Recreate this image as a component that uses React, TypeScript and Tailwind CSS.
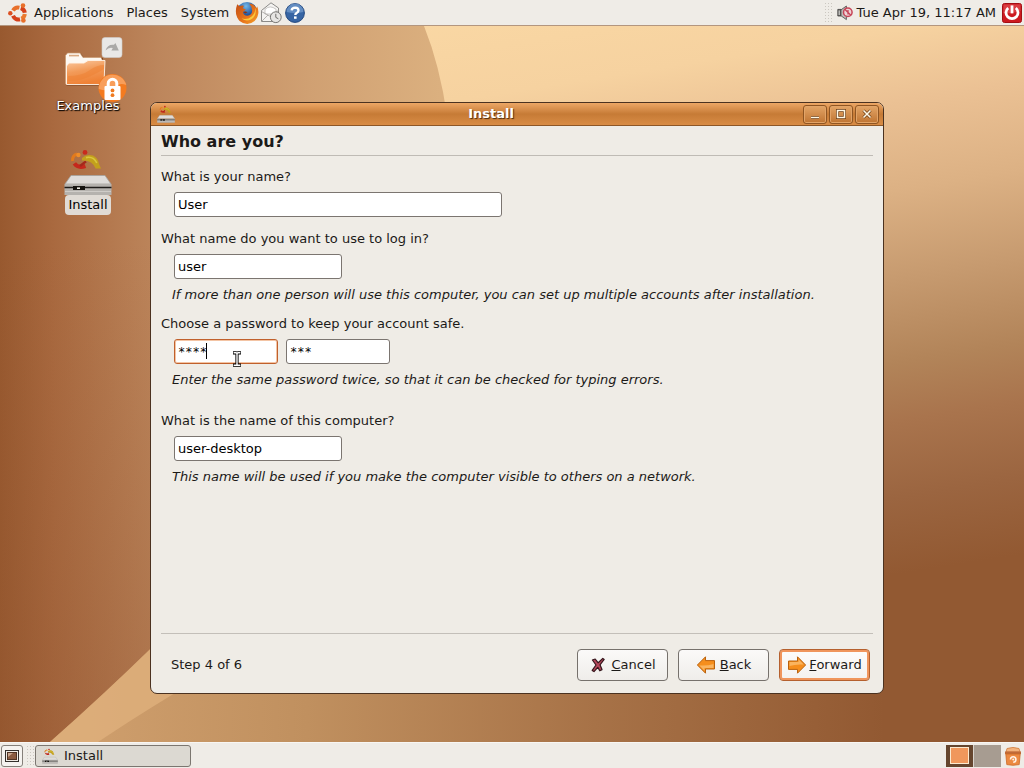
import React, { useState } from 'react';

const Wallpaper = () => (
  <svg
    className="absolute inset-0 h-full w-full"
    viewBox="0 0 1024 717"
    preserveAspectRatio="none"
    aria-hidden="true"
  >
    <defs>
      <linearGradient id="wallLeft" x1="0" y1="0" x2="440" y2="0" gradientUnits="userSpaceOnUse">
        <stop offset="0" stopColor="#98592f" />
        <stop offset="0.12" stopColor="#a9693f" />
        <stop offset="0.36" stopColor="#bd865c" />
        <stop offset="0.7" stopColor="#d0a072" />
        <stop offset="1" stopColor="#dbb07f" />
      </linearGradient>
      <linearGradient id="wallShade" x1="0" y1="0" x2="0" y2="1">
        <stop offset="0.3" stopColor="#8f5430" stopOpacity="0" />
        <stop offset="1" stopColor="#8f5430" stopOpacity="0.35" />
      </linearGradient>
      <linearGradient id="wallRight" x1="760" y1="-70" x2="860" y2="555" gradientUnits="userSpaceOnUse">
        <stop offset="0" stopColor="#fad8a4" />
        <stop offset="0.15" stopColor="#f6d2a0" />
        <stop offset="0.26" stopColor="#ebc194" />
        <stop offset="0.4" stopColor="#dcb184" />
        <stop offset="0.54" stopColor="#c69a6f" />
        <stop offset="0.67" stopColor="#b28459" />
        <stop offset="0.76" stopColor="#a9744d" />
        <stop offset="0.88" stopColor="#9b6540" />
        <stop offset="1" stopColor="#925932" />
      </linearGradient>
      <linearGradient id="wallBottom" x1="60" y1="0" x2="884" y2="0" gradientUnits="userSpaceOnUse">
        <stop offset="0" stopColor="#d0a06e" />
        <stop offset="0.3" stopColor="#c0905f" />
        <stop offset="0.65" stopColor="#a77247" />
        <stop offset="1" stopColor="#925932" />
      </linearGradient>
    </defs>
    <rect width="1024" height="717" fill="url(#wallLeft)" />
    <rect width="450" height="717" fill="url(#wallShade)" />
    <path d="M424 0Q440 40 447 90L500 717H1024V0Z" fill="url(#wallRight)" />
    <path d="M50 717Q105 668 150 624H884V717Z" fill="url(#wallBottom)" />
    <path d="M50 717Q105 668 150 624H250Q160 675 98 717Z" fill="#e0b17e" opacity="0.75" />
  </svg>
);

const UbuntuLogo = () => (
  <svg className="h-5 w-5" viewBox="0 0 20 20" fill="none" aria-hidden="true">
    <path d="M5 7.4A6 6 0 0 1 11.4 4.6" stroke="#e8702a" strokeWidth="4" />
    <path d="M12.8 5A6 6 0 0 1 16.8 9.8" stroke="#d5401b" strokeWidth="4" />
    <path d="M16.8 11A6 6 0 0 1 13.4 15.8" stroke="#ea7a30" strokeWidth="4" />
    <path d="M5 12.8A6 6 0 0 0 12 16.3" stroke="#d5401b" strokeWidth="4" />
    <circle cx="2.3" cy="10.2" r="2.2" fill="#dc4f22" />
    <circle cx="15" cy="2.6" r="2.3" fill="#e8702a" />
    <circle cx="15.4" cy="17.4" r="2.3" fill="#e8702a" />
  </svg>
);

const FirefoxIcon = () => (
  <svg className="h-6 w-6" viewBox="0 0 24 24" aria-hidden="true">
    <defs>
      <radialGradient id="globe" cx="0.45" cy="0.2" r="0.8">
        <stop offset="0" stopColor="#75b9ea" />
        <stop offset="0.5" stopColor="#24579f" />
        <stop offset="1" stopColor="#122a62" />
      </radialGradient>
      <linearGradient id="fox" x1="0" y1="0" x2="1" y2="1">
        <stop offset="0" stopColor="#c14d14" />
        <stop offset="0.6" stopColor="#e8761c" />
        <stop offset="1" stopColor="#f5a52a" />
      </linearGradient>
    </defs>
    <circle cx="12" cy="11.5" r="10.5" fill="url(#globe)" />
    <path
      d="M2.2 3.2L4.6 5.2Q6.6 4 9 4.8L7.8 7.2L10.8 8.4L8 11Q8.4 14.8 12.4 14.8Q16.8 14.4 17.2 9.8Q17 5.6 14.2 2.4Q19.6 3 21.2 7.2L22.2 5.4Q25.6 13.6 19.6 20Q12.2 26 4.6 20Q-1.4 13.2 2.2 3.2Z"
      fill="url(#fox)"
    />
    <path d="M20.6 6.4Q22 15 16 18.6Q11 20.8 6.6 17.6Q12.8 19 16.6 15.4Q20.4 12 20.6 6.4Z" fill="#fbc93a" />
    <path d="M8 11Q10.4 9.8 12.6 11.2L10.2 12.6Z" fill="#8a3210" />
  </svg>
);

const MailIcon = () => (
  <svg className="h-6 w-6" viewBox="0 0 24 24" aria-hidden="true">
    <path d="M2.5 9.5L12 1.8L19.5 7V20.5H2.5Z" fill="#f4f3f1" stroke="#8b8a88" />
    <path d="M6 8.4Q11 3.6 17 8.2V13H6Z" fill="#fff" stroke="#b5b3b0" strokeWidth="0.7" />
    <path d="M2.5 10.5L10.5 15L19.5 9.5M3 20L9 14" fill="none" stroke="#a3a19e" strokeWidth="0.8" />
    <circle cx="16.8" cy="16.2" r="5.4" fill="#e6e5e3" stroke="#777674" />
    <path d="M16.8 12.8V16.4L19.4 17.8" fill="none" stroke="#6e6d6b" />
  </svg>
);

const HelpIcon = () => (
  <svg className="h-5 w-5" viewBox="0 0 20 20" aria-hidden="true">
    <circle cx="10" cy="10" r="9.4" fill="#3765a4" stroke="#254a80" />
    <path d="M1.6 9A8.4 8.4 0 0 1 18.4 9Q10 11 1.6 9Z" fill="#7ba3d2" opacity="0.65" />
    <path
      d="M6.6 7.4Q7 4.7 10.2 4.7Q13.5 4.8 13.5 7.4Q13.4 9 11.6 10Q10.3 10.8 10.3 12"
      fill="none"
      stroke="#fff"
      strokeWidth="2.3"
    />
    <rect x="9" y="13.4" width="2.6" height="2.4" fill="#fff" />
  </svg>
);

const MutedIcon = () => (
  <svg className="h-4 w-4" viewBox="0 0 16 16" aria-hidden="true">
    <path d="M.8 4.4H4V11H.8Z" fill="#6f6e6c" stroke="#3d3c3b" strokeWidth="0.8" />
    <path d="M4 4.8L9.4 1V14.6L4 10.8Z" fill="#bdbbb8" stroke="#4b4a48" strokeWidth="0.8" />
    <path d="M2.2 5.5V10" stroke="#deddda" />
    <circle cx="10.8" cy="7.2" r="4.3" fill="#eed3d5" stroke="#c64458" strokeWidth="1.5" />
    <path d="M7.8 4.2L13.8 10.2M11 5V9.6" stroke="#c64458" strokeWidth="1.3" />
  </svg>
);

const PowerIcon = () => (
  <svg className="h-5 w-5" viewBox="0 0 20 20" fill="none" aria-hidden="true">
    <rect x="0.5" y="0.5" width="19" height="19" rx="2" fill="#cc1a20" stroke="#a30f14" />
    <path d="M1.5 1.5H18.5V8Q10 11 1.5 10Z" fill="#e2575a" opacity="0.6" />
    <path d="M6.2 5A6 6 0 1 0 13.8 5" stroke="#fff" strokeWidth="2.8" />
    <path d="M10 2.4V10.4" stroke="#fff" strokeWidth="2.8" />
  </svg>
);

const Grip = () => (
  <svg className="h-5 w-2" viewBox="0 0 8 20" aria-hidden="true">
    {[1, 4, 7, 10, 13, 16, 19].map((y) => (
      <g key={y} fill="#cbc7c0">
        <rect x="0" y={y - 1} width="1" height="1" />
        <rect x="3" y={y - 1} width="1" height="1" />
        <rect x="6" y={y - 1} width="1" height="1" />
      </g>
    ))}
  </svg>
);

const ExamplesIcon = () => (
  <svg className="h-[62px] w-20 overflow-visible" viewBox="0 0 80 62" aria-hidden="true">
    <defs>
      <linearGradient id="folder" x1="0" y1="0" x2="0.3" y2="1">
        <stop offset="0" stopColor="#fbc9a0" />
        <stop offset="0.5" stopColor="#f29a58" />
        <stop offset="1" stopColor="#ef8236" />
      </linearGradient>
    </defs>
    <path d="M18.5 50.5V21L20.5 18.5H33L36 23H55V31L57 48.5L55 50.5Z" fill="#5e3216" opacity="0.7" />
    <path d="M17.5 49V20.5L19.5 18H32L35 22.5H52.5L54 24V49Z" fill="#fdf8f2" stroke="#c9986f" strokeWidth="0.7" />
    <path d="M21 20.6H31" stroke="#d9a981" strokeWidth="1.6" />
    <path d="M18.5 31L21 28H36L40 25.5H57L56 47.5L53.5 49.5H18.5Z" fill="url(#folder)" stroke="#fff3e6" strokeWidth="0.9" />
    <path d="M20 41Q34 41 42 35Q49 30 56 30V34Q46 40 38 43Q30 46 20 46Z" fill="#ee7f31" opacity="0.5" />
    <rect x="54" y="2.5" width="20" height="20" rx="3" fill="#e9e8e7" stroke="#cfcdcb" strokeWidth="0.6" />
    <path d="M57.5 15.5Q59.5 9 66 9.8L67.4 8L70.8 15.4H63.4L64.8 13Q61 11.8 57.5 15.5Z" fill="#aaa9a8" />
    <circle cx="64.5" cy="53" r="14" fill="#f47b20" />
    <path d="M50.8 54A14 14 0 0 1 78.3 50Q72 47 65 52T50.8 54Z" fill="#f9a869" opacity="0.8" />
    <path d="M60.2 53V48.5A4.3 4.3 0 0 1 68.8 48.5V53" fill="none" stroke="#fff" strokeWidth="3" />
    <rect x="56.5" y="51" width="16" height="14" rx="1" fill="#fff" />
    <circle cx="64.5" cy="55.4" r="1.9" fill="#ef7a20" />
    <circle cx="64.5" cy="60.2" r="1.9" fill="#ef7a20" />
  </svg>
);

const InstallerDrawing = ({ className }: { className: string }) => (
  <svg className={className} viewBox="0 0 48 46" aria-hidden="true">
    <path d="M8.6 12Q8 6.6 13 5" fill="none" stroke="#e27a1c" strokeWidth="3" />
    <path d="M10.4 14.4Q14 19.6 21.4 17" fill="none" stroke="#c5271c" strokeWidth="4" />
    <path d="M16 17L22 12.4" stroke="#a3281b" strokeWidth="2.4" />
    <circle cx="21" cy="3.4" r="2.4" fill="#c92a1d" />
    <circle cx="14.4" cy="6" r="2.2" fill="#ef8d28" />
    <path d="M18 9Q23 4.4 29 6.6Q34 9 35 15L37 19.4L31.6 19.6Q28.4 11 18 11.6Z" fill="#c3a01c" />
    <path d="M22 8.6Q29.6 7 32.8 14" fill="none" stroke="#d9c63e" strokeWidth="1.6" />
    <path d="M7 26.5H41L47 35H1Z" fill="#dedcda" stroke="#a5a29e" strokeWidth="0.8" />
    <path d="M0.5 35H47.5V46H0.5Z" fill="#b5b2ae" />
    <path d="M0.5 38.5H47.5" stroke="#201e1c" strokeWidth="1.4" />
    <rect x="9" y="37" width="12" height="4" fill="#14120f" />
    <rect x="13" y="38.4" width="3" height="1.6" fill="#f0ede6" />
    <path d="M1 42.5H47" stroke="#cfccc8" />
  </svg>
);

const CancelIcon = () => (
  <svg className="h-[18px] w-[18px]" viewBox="0 0 18 18" aria-hidden="true">
    <path
      d="M3.4 4L6.2 3L9.2 6.8L13.8 2.4L15.2 3.4L11 8.8L13 13.6L10.8 14.8L8.8 11.4L5 15.6L3.2 14.4L7 9Z"
      fill="#b5465a"
      stroke="#35161c"
      strokeWidth="1.2"
      strokeLinejoin="round"
    />
  </svg>
);

const ArrowIcon = ({ className }: { className?: string }) => (
  <svg className={`h-5 w-5 ${className ?? ''}`} viewBox="0 0 20 20" aria-hidden="true">
    <path d="M1.5 6H10.5V1.8L18.6 10L10.5 18.2V14.4H1.5Z" fill="#f58e1d" stroke="#b9620f" strokeLinejoin="round" />
    <path d="M2.5 7H11.5V4.2L16.6 9.6Q9 9 2.5 11Z" fill="#fcc47c" opacity="0.7" />
  </svg>
);

const TrashIcon = () => (
  <svg className="h-5 w-[18px]" viewBox="0 0 18 20" aria-hidden="true">
    <path d="M3 2.5Q9 .4 15 2.5L16 6H2Z" fill="#f3b27c" stroke="#cf7a3a" strokeWidth="0.8" />
    <path d="M1 5.5H17V8H1Z" fill="#c06a38" />
    <path d="M1.8 8H16.2L15.2 18.6Q9 20 2.8 18.6Z" fill="#ec8a42" stroke="#cd6a25" strokeWidth="0.8" />
    <path d="M6.5 13.5A2.7 2.7 0 1 1 9.2 16.2" fill="none" stroke="#fff1e4" strokeWidth="1.6" />
    <circle cx="9.2" cy="13.4" r="1" fill="#fff1e4" />
  </svg>
);

const windowButtons = [
  { label: 'Minimize', path: 'M6 12.5H14' },
  { label: 'Maximize', path: 'M6.5 5.5H13.5V12.5H6.5Z' },
  { label: 'Close', path: 'M6.5 5.5L13.5 12.5M13.5 5.5L6.5 12.5' },
];

const inputClass =
  'block h-[25px] rounded-[3px] border border-[#7b7570] bg-white px-[3px] text-black outline-none';

const TopPanel = () => (
  <header className="flex h-[26px] items-center border-b border-[#b3967f] bg-[#efece7] pl-2 pr-0.5">
    <UbuntuLogo />
    <nav className="ml-1.5 flex gap-[13px]">
      <button type="button">Applications</button>
      <button type="button">Places</button>
      <button type="button">System</button>
    </nav>
    <div className="ml-1.5 flex items-center">
      <button type="button" aria-label="Web Browser"><FirefoxIcon /></button>
      <button type="button" aria-label="Mail"><MailIcon /></button>
      <button type="button" aria-label="Help" className="ml-0.5"><HelpIcon /></button>
    </div>
    <div className="ml-auto flex items-center">
      <Grip />
      <button type="button" aria-label="Volume" className="ml-1"><MutedIcon /></button>
      <time className="ml-1 mr-1.5">Tue Apr 19, 11:17 AM</time>
      <button type="button" aria-label="Shut down"><PowerIcon /></button>
    </div>
  </header>
);

const BottomPanel = () => (
  <footer className="flex h-[26px] items-center border-t border-[#f8f6f3] bg-[#efece7] pl-px pr-0.5">
    <button
      type="button"
      aria-label="Show desktop"
      className="flex h-[22px] w-[22px] items-center justify-center rounded-[3px] border border-[#85807a] bg-[#f5f3f0]"
    >
      <svg className="h-3 w-3.5" viewBox="0 0 14 12" aria-hidden="true">
        <rect x="0.5" y="0.5" width="13" height="11" fill="#f0ece6" stroke="#34302c" />
        <rect x="2.5" y="2.5" width="9" height="7" fill="#8a5b40" stroke="#4f3323" />
        <path d="M3 3H8L3 7Z" fill="#c9a58d" />
      </svg>
    </button>
    <span className="ml-1"><Grip /></span>
    <button
      type="button"
      className="flex h-[22px] w-[156px] items-center rounded-[3px] border border-[#7b7670] bg-[#dcd9d2] pl-1.5"
    >
      <InstallerDrawing className="h-4 w-4" />
      <span className="ml-1.5">Install</span>
    </button>
    <div className="ml-auto mr-[3px] flex h-[22px]">
      <button type="button" aria-label="Workspace 1" className="w-[27px] bg-[#65452e] px-1 py-0.5">
        <span className="block h-[17px] border border-[#fbe9cf] bg-[#f0975c]" />
      </button>
      <button type="button" aria-label="Workspace 2" className="w-[28px] border-l border-[#d8d4cd] bg-[#a79c91]" />
    </div>
    <button type="button" aria-label="Trash"><TrashIcon /></button>
  </footer>
);

const App = () => {
  const [name, setName] = useState('User');
  const [login, setLogin] = useState('user');
  const [password, setPassword] = useState('****');
  const [confirm, setConfirm] = useState('***');
  const [host, setHost] = useState('user-desktop');

  return (
    <div className="flex min-h-screen flex-col font-['DejaVu_Sans',sans-serif] text-[13px] leading-5 text-[#1c1a18]">
      <TopPanel />

      <main className="relative flex flex-1 bg-[#b07b52]">
        <Wallpaper />

        {/* Desktop icons */}
        <div className="relative flex w-[150px] flex-col items-start gap-[34px] pl-12 pt-[9px]">
          <button type="button" className="flex w-20 flex-col items-center">
            <ExamplesIcon />
            <span className="relative h-[18px] leading-[18px] text-white [text-shadow:1px_1px_1px_#000,0_0_2px_#3a1d0c]">
              Examples
            </span>
          </button>
          <button type="button" className="flex w-20 flex-col items-center">
            <InstallerDrawing className="h-[46px] w-12" />
            <span className="rounded-[4px] bg-[#e0dbd5] px-[3px] text-black">Install</span>
          </button>
        </div>

        {/* Installer window */}
        <section className="relative mb-12 mr-[140px] mt-[76px] flex flex-1 flex-col overflow-hidden rounded-[7px] border border-[#4b3220] bg-[#efece6]">
          <div className="flex h-[23px] items-center border-b border-[#8d5727] bg-linear-to-b from-[#eda765] via-[#c67b36] to-[#d98c45] pl-1.5 pr-1">
            <InstallerDrawing className="h-[18px] w-[18px]" />
            <h1 className="flex-1 pl-1 text-center font-bold text-white [text-shadow:1px_1px_1px_#4a2a0f]">Install</h1>
            <div className="flex gap-0.5">
              {windowButtons.map((button) => (
                <button
                  key={button.label}
                  type="button"
                  aria-label={button.label}
                  className="flex h-[19px] w-6 items-center justify-center rounded-[3px] border border-[#8f5522] bg-linear-to-b from-[#e3a566] to-[#bf7431] shadow-[inset_0_0_0_1px_#e2a468]"
                >
                  <svg className="h-[18px] w-5" viewBox="0 0 20 18" fill="none" aria-hidden="true">
                    <path d={button.path} stroke="#6d3d13" strokeWidth="3" />
                    <path d={button.path} stroke="#fff8e6" strokeWidth="1.6" />
                  </svg>
                </button>
              ))}
            </div>
          </div>

          <form className="flex flex-1 flex-col px-2.5" onSubmit={(e) => e.preventDefault()}>
            <h2 className="border-b border-[#bfbbb5] pb-[3px] pt-1.5 text-base leading-5 font-bold">Who are you?</h2>

            <div className="mt-[11px]">
              <label htmlFor="name">What is your name?</label>
              <div className="mt-[5px] pl-[13px]">
                <input id="name" className={`${inputClass} w-[328px]`} value={name} onChange={(e) => setName(e.target.value)} />
              </div>
            </div>

            <div className="mt-3">
              <label htmlFor="login">What name do you want to use to log in?</label>
              <div className="mt-[5px] pl-[13px]">
                <input id="login" className={`${inputClass} w-[168px]`} value={login} onChange={(e) => setLogin(e.target.value)} />
              </div>
              <p className="mt-1.5 pl-[11px] italic">
                If more than one person will use this computer, you can set up multiple accounts after installation.
              </p>
            </div>

            <div className="mt-[9px]">
              <label htmlFor="password">Choose a password to keep your account safe.</label>
              <div className="mt-[5px] flex gap-2 pl-[13px]">
                <div className="relative">
                  <input
                    id="password"
                    className="block h-[25px] w-[104px] rounded-[3px] border border-[#c0602c] bg-white px-[3px] font-['DejaVu_Sans_Mono',monospace] text-xs text-black shadow-[inset_0_0_0_1px_#f3c4a4] outline-none"
                    value={password}
                    onChange={(e) => setPassword(e.target.value)}
                  />
                  {/* text caret */}
                  <span className="absolute left-8 top-1 h-4 w-px bg-black" />
                  {/* mouse pointer */}
                  <svg className="absolute left-[57px] top-3 h-4 w-3" viewBox="0 0 12 16" fill="none" aria-hidden="true">
                    <path d="M2 1.8H5Q6 1.8 6 3Q6 1.8 7 1.8H10M6 2.5V13.5M2 14.2H5Q6 14.2 6 13Q6 14.2 7 14.2H10" stroke="#000" strokeWidth="3.2" />
                    <path d="M2.6 1.8H5Q6 1.8 6 3Q6 1.8 7 1.8H9.4M6 2.5V13.5M2.6 14.2H5Q6 14.2 6 13Q6 14.2 7 14.2H9.4" stroke="#fff" strokeWidth="1.4" />
                  </svg>
                </div>
                <input
                  aria-label="Confirm password"
                  className={`${inputClass} w-[104px] font-['DejaVu_Sans_Mono',monospace] text-xs`}
                  value={confirm}
                  onChange={(e) => setConfirm(e.target.value)}
                />
              </div>
              <p className="mt-1.5 pl-[11px] italic">
                Enter the same password twice, so that it can be checked for typing errors.
              </p>
            </div>

            <div className="mt-[21px]">
              <label htmlFor="host">What is the name of this computer?</label>
              <div className="mt-[5px] pl-[13px]">
                <input id="host" className={`${inputClass} w-[168px]`} value={host} onChange={(e) => setHost(e.target.value)} />
              </div>
              <p className="mt-1.5 pl-[11px] italic">
                This name will be used if you make the computer visible to others on a network.
              </p>
            </div>

            <div className="mt-auto flex items-center gap-2.5 border-t border-[#c3bfb9] px-[3px] pb-3 pt-[15px]">
              <span className="mr-auto pl-[7px]">Step 4 of 6</span>
              <button
                type="button"
                className="flex h-8 w-[91px] items-center justify-center gap-1 rounded-[4px] border border-[#76716c] bg-linear-to-b from-[#fbfaf9] to-[#efedea]"
              >
                <CancelIcon />
                <span><u>C</u>ancel</span>
              </button>
              <button
                type="button"
                className="flex h-8 w-[91px] items-center justify-center gap-1 rounded-[4px] border border-[#76716c] bg-linear-to-b from-[#fbfaf9] to-[#efedea]"
              >
                <ArrowIcon className="rotate-180" />
                <span><u>B</u>ack</span>
              </button>
              <button
                type="submit"
                className="flex h-8 w-[91px] items-center justify-center gap-0.5 rounded-[4px] border border-[#b5602e] bg-linear-to-b from-[#fdfcfb] to-[#f4f1ee] shadow-[inset_0_0_0_2px_#f0955c]"
              >
                <ArrowIcon />
                <span><u>F</u>orward</span>
              </button>
            </div>
          </form>
        </section>
      </main>

      <BottomPanel />
    </div>
  );
};

export default App;
